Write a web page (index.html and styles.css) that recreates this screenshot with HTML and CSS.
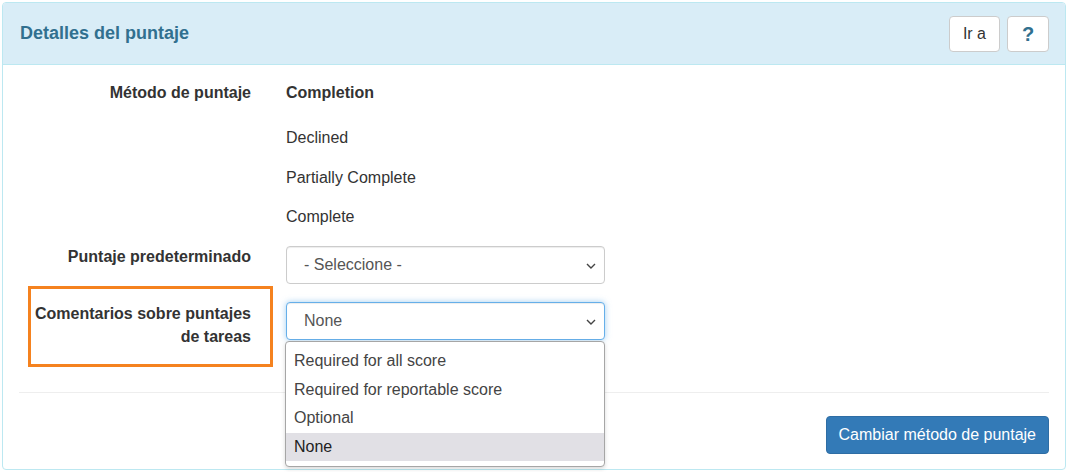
FILE: index.html
```html
<!DOCTYPE html>
<html lang="es">
<head>
<meta charset="utf-8">
<title>Detalles del puntaje</title>
<link rel="stylesheet" href="styles.css">
</head>
<body>
<div class="panel">
  <div class="panel-heading">
    <h3 class="panel-title">Detalles del puntaje</h3>
    <div class="heading-actions">
      <button class="btn btn-default">Ir a</button>
      <button class="btn btn-default btn-help">?</button>
    </div>
  </div>
  <div class="panel-body">
    <div class="form-row">
      <div class="label">Método de puntaje</div>
      <div class="values">
        <div class="value value-strong">Completion</div>
        <div class="value">Declined</div>
        <div class="value">Partially Complete</div>
        <div class="value">Complete</div>
      </div>
    </div>
    <div class="form-row row-select">
      <div class="label">Puntaje predeterminado</div>
      <div class="field">
        <div class="select"><span>- Seleccione -</span><svg class="chev" viewBox="0 0 10 6" width="10" height="6"><path d="M1 1l4 4 4-4" fill="none" stroke="#444" stroke-width="1.4"/></svg></div>
      </div>
    </div>
    <div class="form-row row-select row-comments">
      <div class="label label-two">Comentarios sobre puntajes de tareas</div>
      <div class="highlight-box"></div>
      <div class="field">
        <div class="select select-focus"><span>None</span><svg class="chev" viewBox="0 0 10 6" width="10" height="6"><path d="M1 1l4 4 4-4" fill="none" stroke="#444" stroke-width="1.4"/></svg></div>
        <ul class="dropdown">
          <li>Required for all score</li>
          <li>Required for reportable score</li>
          <li>Optional</li>
          <li class="active">None</li>
        </ul>
      </div>
    </div>
    <hr class="divider">
    <div class="footer-actions">
      <button class="btn btn-primary">Cambiar método de puntaje</button>
    </div>
  </div>
</div>
</body>
</html>
```

FILE: styles.css
```css
* { box-sizing: border-box; }
html, body { margin: 0; padding: 0; background: #fff; }
body {
  padding: 2px;
  font-family: "Liberation Sans", Arial, sans-serif;
  font-size: 16px;
  line-height: 22px;
  color: #333;
}
.panel {
  width: 1064px;
  border: 1px solid #bce8f1;
  border-radius: 4px;
  background: #fff;
}
.panel-heading {
  height: 62px;
  background: #d9edf7;
  border-bottom: 1px solid #bce8f1;
  border-radius: 3px 3px 0 0;
  display: flex;
  align-items: center;
  justify-content: space-between;
  padding: 0 16px 0 17px;
}
.panel-title {
  margin: 0;
  font-size: 18px;
  font-weight: bold;
  color: #31708f;
  line-height: 22px;
  padding-bottom: 2px;
}
.heading-actions {
  display: flex;
  gap: 7px;
  margin-top: 1px;
}
.btn {
  font-family: "Liberation Sans", Arial, sans-serif;
  font-size: 16px;
  line-height: 22px;
  height: 36px;
  border-radius: 4px;
  border: 1px solid #ccc;
  padding: 0 13px;
  cursor: pointer;
}
.btn-default { background: #fff; color: #333; }
.btn-help {
  width: 42px;
  padding: 0;
  color: #31708f;
  font-weight: bold;
  font-size: 20px;
}
.panel-body {
  padding: 17px 16px 15px 16px;
}
.form-row {
  display: grid;
  grid-template-columns: 232px 319px;
  column-gap: 35px;
  position: relative;
}
.label {
  text-align: right;
  font-weight: bold;
  line-height: 22px;
  padding-left: 10px;
}
.values {
  display: flex;
  flex-direction: column;
  gap: 17.7px;
}
.value { line-height: 22px; }
.value-strong { font-weight: bold; margin-bottom: 5.3px; }
.row-select { margin-top: 18px; }
.field { position: relative; }
.select {
  height: 38px;
  border: 1px solid #ccc;
  border-radius: 4px;
  background: #fff;
  display: flex;
  align-items: center;
  justify-content: space-between;
  padding: 0 8px 0 17px;
  color: #555;
  box-shadow: inset 0 1px 1px rgba(0,0,0,.075);
}
.select-focus {
  border-color: #66afe9;
  box-shadow: inset 0 1px 1px rgba(0,0,0,.075), 0 0 6px rgba(102,175,233,.6);
}
.chev { margin-top: 1px; }
.label-two { line-height: 23px; margin-top: -0.5px; }
.highlight-box {
  position: absolute;
  left: 9px;
  top: -16px;
  width: 245px;
  height: 81px;
  border: 3px solid #f5821f;
  pointer-events: none;
}
.dropdown {
  position: absolute;
  left: -1px;
  top: 39px;
  width: 320px;
  height: 126px;
  margin: 0;
  padding: 5px 0 0 0;
  list-style: none;
  background: #fff;
  border: 1px solid #a6a6a6;
  border-radius: 4px;
  box-shadow: 0 2px 4px rgba(0,0,0,.15);
  z-index: 5;
}
.dropdown li {
  height: 28.5px;
  line-height: 28.5px;
  padding-left: 8px;
  color: #444;
}
.dropdown li.active { background: #e1e0e5; color: #222; }
.divider {
  border: 0;
  border-top: 1px solid #eee;
  margin: 44px 0 0 0;
  height: 0;
}
.footer-actions {
  display: flex;
  justify-content: flex-end;
  margin-top: 23px;
}
.btn-primary {
  height: 38px;
  background: #337ab7;
  border-color: #2e6da4;
  color: #fff;
  padding: 0 12px;
}
```
